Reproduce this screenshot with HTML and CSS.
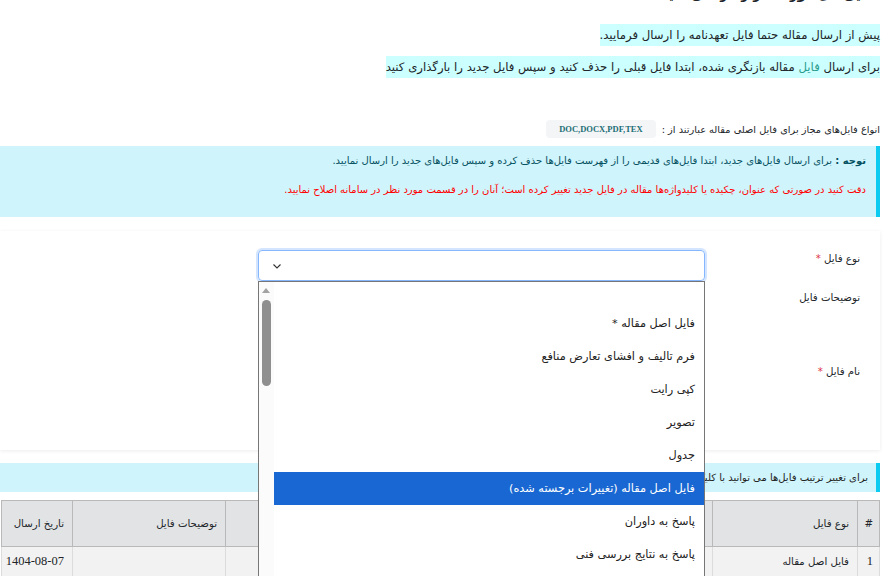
FILE: index.html
```html
<!DOCTYPE html>
<html lang="fa" dir="rtl">
<head>
  <meta charset="UTF-8">
  <meta name="viewport" content="width=device-width, initial-scale=1.0">
  <title>ارسال فایل‌ها</title>
  <link rel="stylesheet" href="styles.css">
</head>
<body>
  <div class="page">
    <!-- عنوان بخش -->
    <h5 class="page-title">فایل‌های مورد نظر را ارسال کنید</h5>

    <p class="note"><span class="hl">پیش از ارسال مقاله حتما فایل تعهدنامه را ارسال فرمایید.</span></p>
    <p class="note"><span class="hl">برای ارسال <span class="teal">فایل</span> مقاله بازنگری شده، ابتدا فایل قبلی را حذف کنید و سپس فایل جدید را بارگذاری کنید</span></p>

    <div class="allowed">
      <span>انواع فایل‌های مجاز برای فایل اصلی مقاله عبارتند از :</span>
      <code class="ext">DOC,DOCX,PDF,TEX</code>
    </div>

    <div class="alert">
      <p><b>توجه :</b> برای ارسال فایل‌های جدید، ابتدا فایل‌های قدیمی را از فهرست فایل‌ها حذف کرده و سپس فایل‌های جدید را ارسال نمایید.</p>
      <p class="red">دقت کنید در صورتی که عنوان، چکیده یا کلیدواژه‌ها مقاله در فایل جدید تغییر کرده است؛ آنان را در قسمت مورد نظر در سامانه اصلاح نمایید.</p>
    </div>

    <!-- فرم ارسال فایل -->
    <div class="card">
      <div class="form-row">
        <label class="form-label">نوع فایل <span class="req">*</span></label>
        <div class="form-field">
          <div class="select">
            <svg width="10" height="10" viewBox="0 0 10 10">
              <path d="M 1.5,3.5 L 5,7 L 8.5,3.5" fill="none" stroke="#333" stroke-width="1.1" />
            </svg>
          </div>
          <div class="dropdown">
            <div class="scrollbar">
              <span class="scroll-up"></span>
              <span class="scroll-thumb"></span>
            </div>
            <ul class="options">
              <li class="empty"></li>
              <li>فایل اصل مقاله *</li>
              <li>فرم تالیف و افشای تعارض منافع</li>
              <li>کپی رایت</li>
              <li>تصویر</li>
              <li>جدول</li>
              <li class="selected">فایل اصل مقاله (تغییرات برجسته شده)</li>
              <li>پاسخ به داوران</li>
              <li>پاسخ به نتایج بررسی فنی</li>
              <li>سایر</li>
            </ul>
          </div>
        </div>
      </div>
      <div class="form-row">
        <label class="form-label">توضیحات فایل</label>
        <div class="form-field"><div class="textarea"></div></div>
      </div>
      <div class="form-row">
        <label class="form-label">نام فایل <span class="req">*</span></label>
        <div class="form-field"><div class="file-input"></div></div>
      </div>
    </div>

    <div class="strip">برای تغییر ترتیب فایل‌ها می توانید با کلیک و کشیدن ردیف‌ها، ترتیب را تغییر دهید.</div>

    <table class="files">
      <thead>
        <tr>
          <th class="c-num">#</th>
          <th class="c-type">نوع فایل</th>
          <th class="c-name">نام فایل</th>
          <th class="c-size">حجم</th>
          <th class="c-desc">توضیحات فایل</th>
          <th class="c-date">تاریخ ارسال</th>
        </tr>
      </thead>
      <tbody>
        <tr>
          <td class="num">1</td>
          <td>فایل اصل مقاله</td>
          <td></td>
          <td></td>
          <td></td>
          <td class="date">1404-08-07</td>
        </tr>
      </tbody>
    </table>
  </div>
</body>
</html>
```

FILE: styles.css
```css
* {
  margin: 0;
  padding: 0;
  box-sizing: border-box;
}

body {
  font-family: "DejaVu Sans", "Noto Sans", sans-serif;
  background-color: #ffffff;
  color: #212529;
  font-size: 11px;
  overflow: hidden;
}

.page {
  width: 880px;
  margin-right: auto;
}

/* عنوان */
.page-title {
  font-size: 13px;
  font-weight: 700;
  margin-top: -13px;
  height: 20px;
  padding-right: 6px;
}

.note {
  margin-top: 16px;
  font-size: 11.7px;
  line-height: 24px;
}

.note + .note {
  margin-top: 8px;
}

.hl {
  background-color: #ccffff;
  padding: 4px 0;
}

.teal {
  color: #2a9d8f;
}

.allowed {
  display: flex;
  align-items: center;
  gap: 6px;
  margin-top: 41px;
  height: 18px;
  font-size: 9.8px;
}

.ext {
  font-family: "Liberation Serif", serif;
  font-weight: 700;
  font-size: 8.5px;
  color: #1b6e75;
  background-color: #f4f5f7;
  border-radius: 4px;
  padding: 4px 13px;
  direction: ltr;
}

/* پیام توجه */
.alert {
  margin-top: 8px;
  height: 71px;
  background-color: #cff4fc;
  border-right: 4px solid #0dcaf0;
  padding: 6px 10px 0 0;
  color: #055160;
  font-size: 10px;
}

.alert p {
  line-height: 18px;
}

.alert .red {
  color: #ff0000;
  margin-top: 11px;
}

/* کارت فرم */
.card {
  margin-top: 14px;
  height: 219px;
  background-color: #ffffff;
  box-shadow: 0 1px 4px rgba(0, 0, 0, 0.08);
  padding: 19px 20px 0 0;
}

.form-row {
  display: flex;
  align-items: flex-start;
  margin-bottom: 8px;
}

.form-label {
  width: 155px;
  padding-top: 1px;
  font-size: 10.2px;
  line-height: 16px;
}

.req {
  color: #e03545;
}

.form-field {
  position: relative;
  width: 447px;
}

.select {
  height: 31px;
  border: 1px solid #86b7fe;
  border-radius: 4px;
  box-shadow: 0 0 0 2px rgba(13, 110, 253, 0.18);
  display: flex;
  align-items: center;
  justify-content: flex-end;
  padding-left: 13px;
}

.textarea {
  height: 66px;
}

.file-input {
  height: 31px;
}

/* لیست باز شده */
.dropdown {
  position: absolute;
  top: 31px;
  right: 0;
  width: 447px;
  height: 340px;
  border: 1px solid #767676;
  background-color: #ffffff;
  display: flex;
  flex-direction: row-reverse;
  z-index: 10;
}

.scrollbar {
  width: 15px;
  background-color: #fbfbfb;
  position: relative;
}

.scroll-up {
  position: absolute;
  top: 6px;
  left: 3px;
  border-left: 4px solid transparent;
  border-right: 4px solid transparent;
  border-bottom: 5px solid #a3a3a3;
}

.scroll-thumb {
  position: absolute;
  top: 18px;
  left: 3px;
  width: 9px;
  height: 86px;
  border-radius: 5px;
  background-color: #8f8f8f;
}

.options {
  list-style: none;
  flex: 1;
}

.options li {
  height: 33px;
  line-height: 33px;
  padding-right: 9px;
  font-size: 11.3px;
  color: #222;
}

.options li.empty {
  height: 25px;
}

.options li.selected {
  background-color: #1967d2;
  color: #ffffff;
}

/* نوار راهنما */
.strip {
  margin-top: 13px;
  height: 29px;
  line-height: 29px;
  background-color: #cff4fc;
  border-right: 4px solid #0dcaf0;
  padding-right: 8px;
  font-size: 10px;
  color: #222;
}

/* جدول فایل‌ها */
.files {
  margin-top: 8px;
  width: 878px;
  border-collapse: collapse;
  table-layout: fixed;
  font-size: 10.2px;
}

.files th,
.files td {
  border: 1px solid #b9b9b9;
  text-align: right;
  padding: 0 8px;
  font-weight: 400;
  white-space: nowrap;
  overflow: hidden;
}

.files th {
  height: 46px;
  background-color: #e2e3e5;
}

.files td {
  height: 30px;
  background-color: #f2f2f2;
  border-color: #dcdcdc;
}

.files .c-num { width: 22px; padding: 0 6px; }
.c-type { width: 145px; }
.c-name { width: 243px; }
.c-size { width: 244px; }
.c-desc { width: 153px; }
.c-date { width: 71px; }

.files .num {
  padding: 0 6px;
}

.files .num,
.files .date {
  font-family: "Liberation Serif", serif;
  font-size: 12.5px;
}
```
